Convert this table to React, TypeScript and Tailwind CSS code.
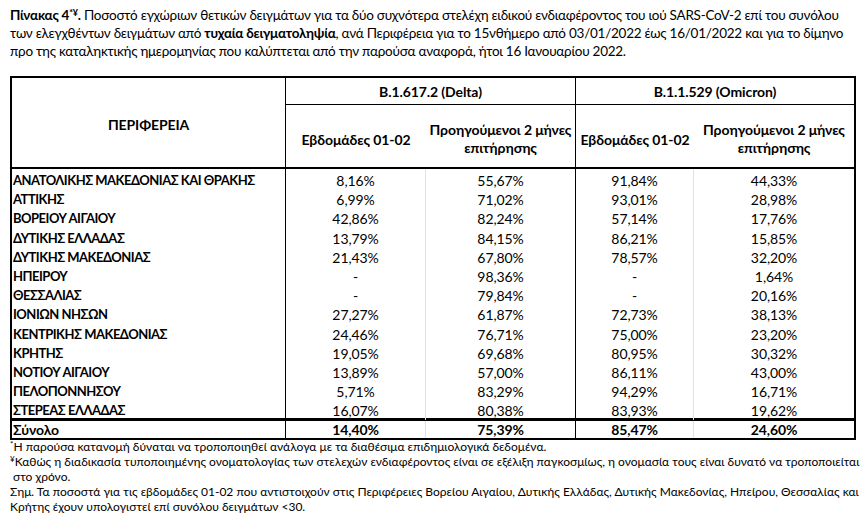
import React from "react";

const rows: string[][] = [
  ["ΑΝΑΤΟΛΙΚΗΣ ΜΑΚΕΔΟΝΙΑΣ ΚΑΙ ΘΡΑΚΗΣ", "8,16%", "55,67%", "91,84%", "44,33%"],
  ["ΑΤΤΙΚΗΣ", "6,99%", "71,02%", "93,01%", "28,98%"],
  ["ΒΟΡΕΙΟΥ ΑΙΓΑΙΟΥ", "42,86%", "82,24%", "57,14%", "17,76%"],
  ["ΔΥΤΙΚΗΣ ΕΛΛΑΔΑΣ", "13,79%", "84,15%", "86,21%", "15,85%"],
  ["ΔΥΤΙΚΗΣ ΜΑΚΕΔΟΝΙΑΣ", "21,43%", "67,80%", "78,57%", "32,20%"],
  ["ΗΠΕΙΡΟΥ", "-", "98,36%", "-", "1,64%"],
  ["ΘΕΣΣΑΛΙΑΣ", "-", "79,84%", "-", "20,16%"],
  ["ΙΟΝΙΩΝ ΝΗΣΩΝ", "27,27%", "61,87%", "72,73%", "38,13%"],
  ["ΚΕΝΤΡΙΚΗΣ ΜΑΚΕΔΟΝΙΑΣ", "24,46%", "76,71%", "75,00%", "23,20%"],
  ["ΚΡΗΤΗΣ", "19,05%", "69,68%", "80,95%", "30,32%"],
  ["ΝΟΤΙΟΥ ΑΙΓΑΙΟΥ", "13,89%", "57,00%", "86,11%", "43,00%"],
  ["ΠΕΛΟΠΟΝΝΗΣΟΥ", "5,71%", "83,29%", "94,29%", "16,71%"],
  ["ΣΤΕΡΕΑΣ ΕΛΛΑΔΑΣ", "16,07%", "80,38%", "83,93%", "19,62%"],
];

const cols = "grid grid-cols-[274px_140px_150px_118px_160px]";

export default function App() {
  return (
    <div className="w-[868px] h-[524px] bg-white text-black overflow-hidden font-['Lato','Open_Sans',sans-serif]">
      <div className="pl-[10px] pt-[6px] text-[13.5px] leading-[18px] tracking-[-0.25px] whitespace-nowrap">
        <div>
          <span className="font-bold">
            Πίνακας 4<sup className="text-[9px]">*¥</sup>.
          </span>{" "}
          Ποσοστό εγχώριων θετικών δειγμάτων για τα δύο συχνότερα στελέχη ειδικού ενδιαφέροντος του ιού SARS-CoV-2 επί του συνόλου
        </div>
        <div>
          των ελεγχθέντων δειγμάτων από <span className="font-bold">τυχαία δειγματοληψία</span>, ανά Περιφέρεια για το 15νθήμερο από 03/01/2022 έως 16/01/2022 και για το δίμηνο
        </div>
        <div>προ της καταληκτικής ημερομηνίας που καλύπτεται από την παρούσα αναφορά, ήτοι 16 Ιανουαρίου 2022.</div>
      </div>

      <div className="ml-[10px] mt-[16px] w-[846px] border-2 border-black text-[14px] tracking-[-0.1px]">
        <div className={`${cols} grid-rows-[27px_64px] font-bold`}>
          <div className="row-span-2 border-r border-b-2 border-black flex items-center justify-center pt-[4px]">
            ΠΕΡΙΦΕΡΕΙΑ
          </div>
          <div className="col-span-2 border-r border-b border-black flex items-center justify-center">
            B.1.617.2 (Delta)
          </div>
          <div className="col-span-2 border-b border-black flex items-center justify-center">
            B.1.1.529 (Omicron)
          </div>
          <div className="border-b-2 border-black flex items-center justify-center pt-[6px]">Εβδομάδες 01-02</div>
          <div className="border-r border-b-2 border-black flex items-center justify-center text-center leading-[18px] pt-[6px]">
            Προηγούμενοι 2 μήνες
            <br />
            επιτήρησης
          </div>
          <div className="border-b-2 border-black flex items-center justify-center pt-[6px]">Εβδομάδες 01-02</div>
          <div className="border-b-2 border-black flex items-center justify-center text-center leading-[18px] pt-[6px]">
            Προηγούμενοι 2 μήνες
            <br />
            επιτήρησης
          </div>
        </div>
        {rows.map((r) => (
          <div key={r[0]} className={`${cols} h-[19.2px] leading-[19px]`}>
            <div className="border-r border-black pl-[1px] pt-[2px] font-bold text-[13px] tracking-[-0.5px] whitespace-nowrap">{r[0]}</div>
            <div className="border-r border-[#e2e2e2] pt-[2px] text-center">{r[1]}</div>
            <div className="border-r border-black pt-[2px] text-center">{r[2]}</div>
            <div className="border-r border-[#e2e2e2] pt-[2px] text-center">{r[3]}</div>
            <div className="pt-[2px] text-center">{r[4]}</div>
          </div>
        ))}
        <div className={`${cols} h-[20px] leading-[17px] border-t-[3px] border-black font-bold`}>
          <div className="border-r border-black pl-[1px]">Σύνολο</div>
          <div className="border-r border-[#e2e2e2] text-center">14,40%</div>
          <div className="border-r border-black text-center">75,39%</div>
          <div className="border-r border-[#e2e2e2] text-center">85,47%</div>
          <div className="text-center">24,60%</div>
        </div>
      </div>

      <div className="pl-[10px] text-[12px] leading-[14.8px] whitespace-nowrap">
        <div>
          <sup className="text-[8px]">*</sup>Η παρούσα κατανομή δύναται να τροποποιηθεί ανάλογα με τα διαθέσιμα επιδημιολογικά δεδομένα.
        </div>
        <div>
          <sup className="text-[8px]">¥</sup>Καθώς η διαδικασία τυποποιημένης ονοματολογίας των στελεχών ενδιαφέροντος είναι σε εξέλιξη παγκοσμίως, η ονομασία τους είναι δυνατό να τροποποιείται
        </div>
        <div className="pl-[3px]">στο χρόνο.</div>
        <div>
          Σημ. Τα ποσοστά για τις εβδομάδες 01-02 που αντιστοιχούν στις Περιφέρειες Βορείου Αιγαίου, Δυτικής Ελλάδας, Δυτικής Μακεδονίας, Ηπείρου, Θεσσαλίας και
        </div>
        <div>Κρήτης έχουν υπολογιστεί επί συνόλου δειγμάτων &lt;30.</div>
      </div>
    </div>
  );
}
